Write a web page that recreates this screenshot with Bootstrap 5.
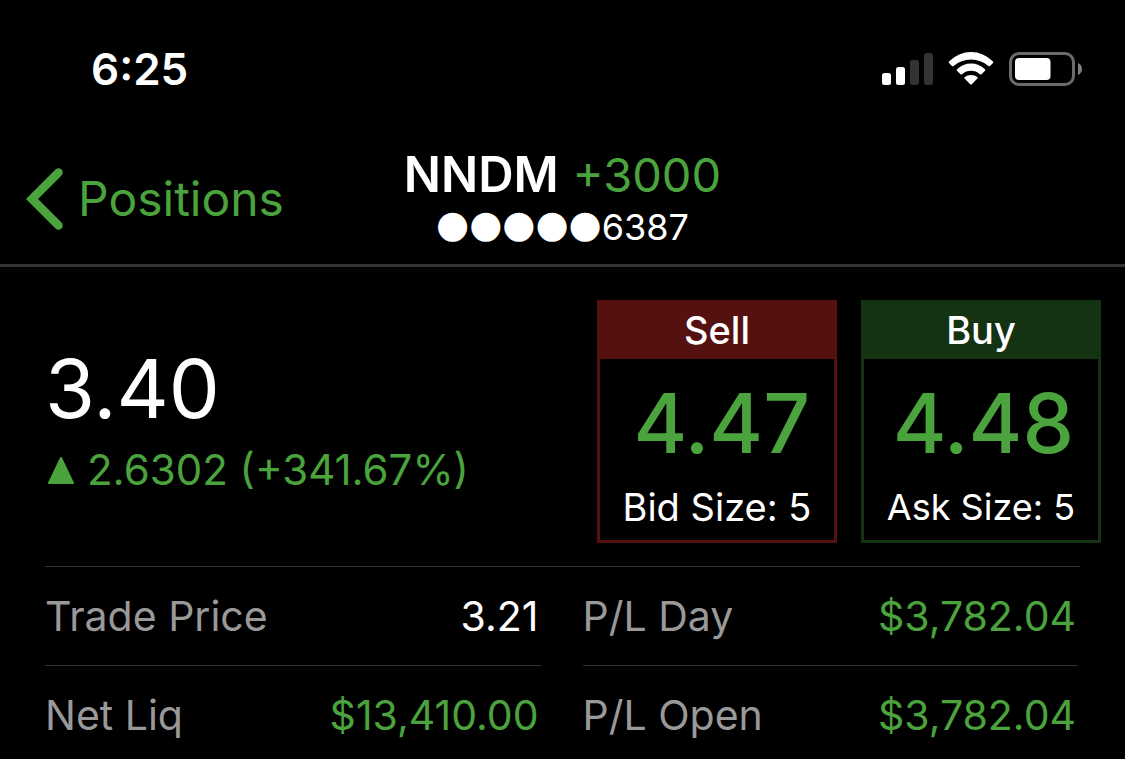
<!DOCTYPE html>
<html lang="en" data-bs-theme="dark">
<head>
<meta charset="utf-8">
<meta name="viewport" content="width=device-width, initial-scale=1">
<title>NNDM position</title>
<link href="https://cdn.jsdelivr.net/npm/bootstrap@5.3.0/dist/css/bootstrap.min.css" rel="stylesheet">
<style>
  :root { --up: #4aa33c; --rule: #333; --sell: #54110f; --buy: #143312; }
  body { background: #000; color: #fff; font-family: Inter, "Liberation Sans", sans-serif; overflow-x: hidden; }
  .status { padding: 44px 43px 0 91px; }
  .clock { font-size: 44px; line-height: 50px; font-weight: 600; }
  .titlebar { display: grid; grid-template-columns: 1fr auto 1fr; padding: 54px 24px 15px; border-bottom: 3px solid var(--rule); }
  .up { color: var(--up); }
  .back { font-size: 48px; line-height: 64px; gap: 14px; }
  .symbol { font-size: 49px; line-height: 54px; }
  .symbol .up { font-size: 47px; }
  .account { font-size: 36px; line-height: 44px; margin-top: 3px; }
  .mask-dots { font-family: "DejaVu Sans", sans-serif; font-size: 38px; line-height: 38px; }
  .quote { padding: 33px 24px 23px 45px; }
  .last { font-size: 81px; line-height: 82px; }
  .change { font-size: 42px; line-height: 48px; gap: 12px; margin: 16px 0 2px; }
  .sides { gap: 24px; }
  .side { width: 240px; padding: 0; background: #000; color: #fff; border: 3px solid var(--tone); }
  .side-sell { --tone: var(--sell); }
  .side-buy { --tone: var(--buy); }
  .side-name { background: var(--tone); font-size: 38px; line-height: 54px; padding-bottom: 2px; font-weight: 500; }
  .side-price { font-size: 82px; line-height: 82px; font-weight: 500; padding: 24px 24px 0 0; }
  .side-size { font-size: 36px; line-height: 44px; padding: 20px 0 11px; }
  .side-sell .side-size { font-size: 38px; }
  .figures { margin: 0 45px; padding-right: 2px; border-top: 1px solid var(--rule); display: grid; grid-template-columns: 1fr 1fr; column-gap: 42px; }
  .figure-row { font-size: 41px; line-height: 48px; padding: 25px 2px 25px 0; }
  .figure-row + .figure-row { border-top: 1px solid var(--rule); }
  .figure-row dt { font-weight: 400; color: #999; }
</style>
</head>
<body>
<header>
  <div class="status d-flex justify-content-between align-items-center">
    <div class="clock">6:25</div>
    <svg width="201" height="36" viewBox="881 51 201 36" aria-label="Signal, Wi-Fi and battery" role="img">
      <g fill="#fff"><rect x="882" y="73" width="9" height="12" rx="2.5"/><rect x="896" y="67" width="9" height="18" rx="2.5"/></g>
      <g fill="#333"><rect x="910" y="60" width="9" height="25" rx="2.5"/><rect x="924" y="53" width="9" height="32" rx="2.5"/></g>
      <g fill="#fff">
        <path d="M949 61.5Q948.300 62.300 949 63L952 66Q952.800 66.700 953.600 66Q961 59.500 971 59.500T988.400 66Q989.200 66.700 990 66L993 63Q993.700 62.300 993 61.500Q983.500 52 971 52T949 61.500Z"/>
        <path d="M957 69.300Q956.300 70 957 70.800L960.500 74.200Q961.200 74.800 962 74.200Q966 70.800 971 70.800T980 74.200Q980.800 74.800 981.500 74.200L985 70.800Q985.700 70 985 69.300Q979 63.600 971 63.600T957 69.300Z"/>
        <path d="M964.500 77.300Q964 78 964.600 78.600L970.200 84.200Q971 85 971.800 84.200L977.400 78.600Q978 78 977.500 77.300Q974.800 75 971 75T964.500 77.300Z"/>
      </g>
      <rect x="1010.500" y="53.500" width="63" height="31" rx="8.500" fill="none" stroke="#6b6b6b" stroke-width="3"/>
      <rect x="1015" y="58" width="35.500" height="22" rx="4" fill="#fff"/>
      <path d="M1078 63Q1082 65 1082 69T1078 75Z" fill="#808080"/>
    </svg>
  </div>
  <nav class="titlebar">
    <a href="#" class="back up d-flex align-items-center justify-content-start text-decoration-none">
      <svg width="40" height="64" viewBox="0 0 40 64" fill="none" stroke="currentColor" stroke-width="8.500" stroke-linecap="round" stroke-linejoin="miter" aria-hidden="true"><path d="M34.500 5.500 8 32 34.500 58.500"/></svg>
      <span>Positions</span>
    </a>
    <div class="text-center">
      <div class="symbol"><span class="fw-semibold">NNDM</span> <span class="up">+3000</span></div>
      <div class="account d-flex justify-content-center align-items-start"><span class="mask-dots">●●●●●</span><span>6387</span></div>
    </div>
    <div></div>
  </nav>
</header>
<main>
  <section class="quote d-flex justify-content-between align-items-center">
    <div>
      <div class="last">3.40</div>
      <div class="change up d-flex align-items-center">
        <svg width="30" height="30" viewBox="0 0 30 30" aria-hidden="true"><path d="M16 3 28 28H4Z" fill="currentColor" stroke="currentColor" stroke-width="2" stroke-linejoin="round"/></svg>
        <span>2.6302 (+341.67%)</span>
      </div>
    </div>
    <div class="sides d-flex">
      <button type="button" class="side side-sell">
        <span class="side-name d-block">Sell</span>
        <span class="side-price up d-block text-end">4.47</span>
        <span class="side-size d-block">Bid Size: 5</span>
      </button>
      <button type="button" class="side side-buy">
        <span class="side-name d-block">Buy</span>
        <span class="side-price up d-block text-end">4.48</span>
        <span class="side-size d-block">Ask Size: 5</span>
      </button>
    </div>
  </section>
  <section class="figures">
    <dl class="mb-0">
      <div class="figure-row d-flex justify-content-between"><dt>Trade Price</dt><dd class="mb-0">3.21</dd></div>
      <div class="figure-row d-flex justify-content-between"><dt>Net Liq</dt><dd class="mb-0 up">$13,410.00</dd></div>
    </dl>
    <dl class="mb-0">
      <div class="figure-row d-flex justify-content-between"><dt>P/L Day</dt><dd class="mb-0 up">$3,782.04</dd></div>
      <div class="figure-row d-flex justify-content-between"><dt>P/L Open</dt><dd class="mb-0 up">$3,782.04</dd></div>
    </dl>
  </section>
</main>
<script src="https://cdn.jsdelivr.net/npm/bootstrap@5.3.0/dist/js/bootstrap.bundle.min.js"></script>
</body>
</html>
